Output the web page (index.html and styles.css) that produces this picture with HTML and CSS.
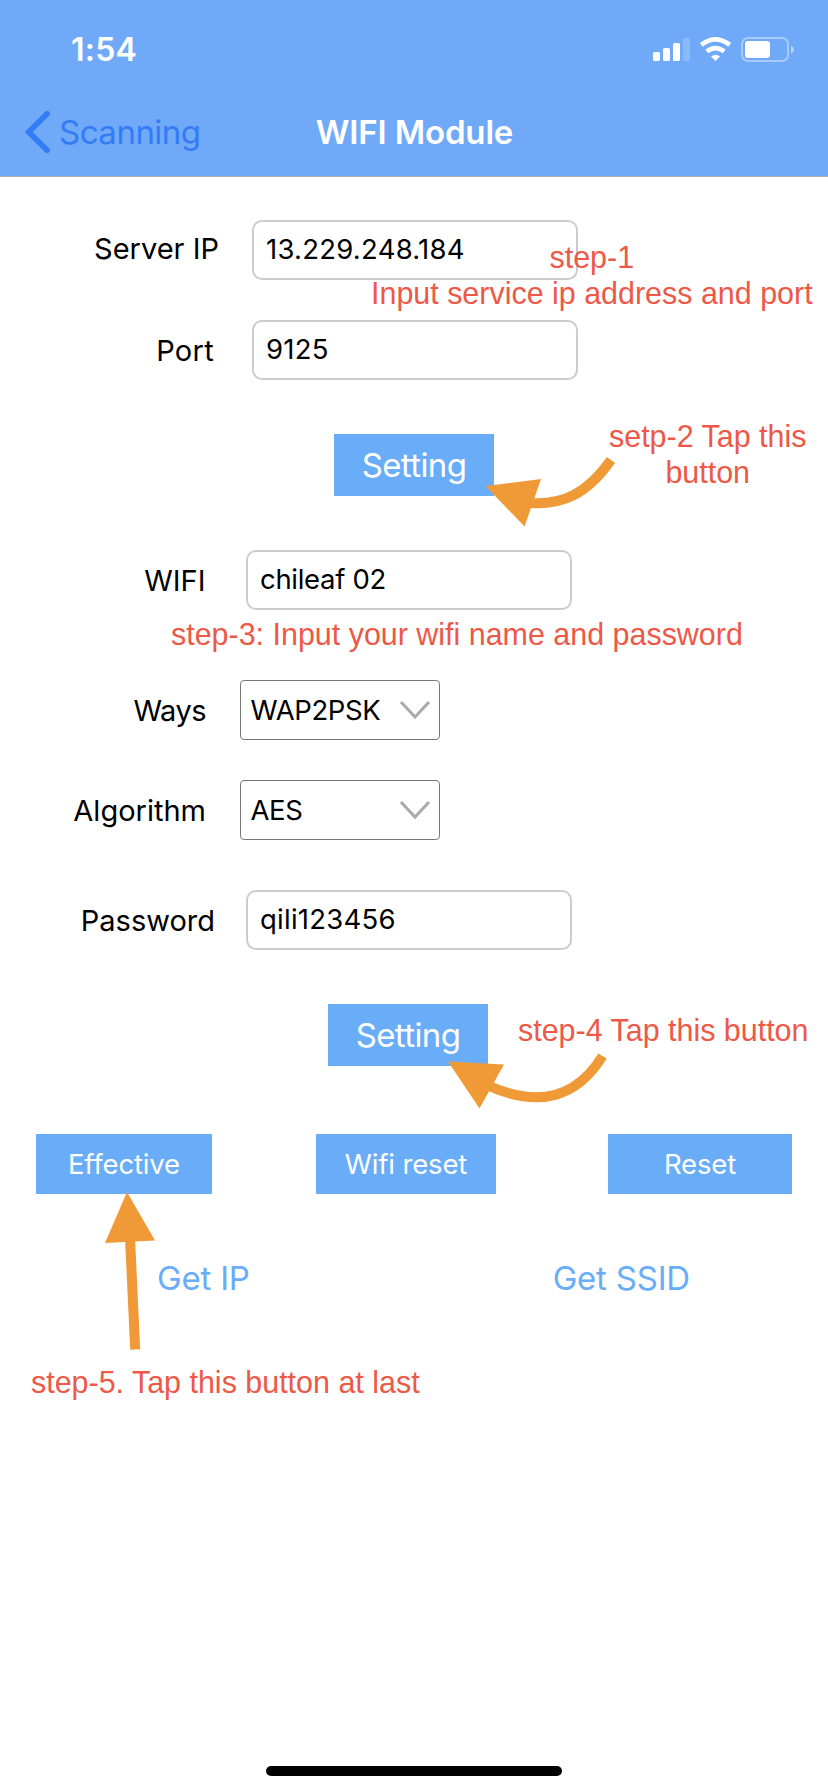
FILE: index.html
```
<!DOCTYPE html>
<html lang="en">
<head>
<meta charset="utf-8">
<title>WIFI Module</title>
<link rel="stylesheet" href="styles.css">
</head>
<body>
<div class="screen">
  <header class="header">
    <div class="status">
      <span class="time">1:54</span>
      <svg class="status-icons" width="142" height="26" viewBox="652 37 142 26">
        <g fill="#fff">
          <rect x="653" y="52" width="7" height="9" rx="1.6"/>
          <rect x="663" y="48" width="7" height="13" rx="1.6"/>
          <rect x="673" y="43" width="7" height="18" rx="1.6"/>
          <rect x="683" y="38" width="7" height="23" rx="1.6" opacity=".2"/>
          <path d="M715.5 61 L711 56.5 Q715.500 52.800 720 56.500Z"/>
          <rect x="745" y="41" width="25" height="17" rx="3"/>
        </g>
        <g fill="none" stroke="#fff" stroke-width="4.600">
          <path d="M701.300 44.900 Q715.500 33.800 729.700 44.900"/>
          <path d="M706.800 51.400 Q715.500 44.800 724.200 51.400"/>
        </g>
        <rect x="742" y="38" width="46" height="23" rx="6" fill="none" stroke="#fff" stroke-width="2" opacity=".4"/>
        <path d="M791 45.500 Q794 47 794 49.500 Q794 52 791 53.500Z" fill="#fff" opacity=".5"/>
      </svg>
    </div>
    <nav class="nav">
      <a class="back">
        <svg width="26" height="44" viewBox="25 110 26 44"><path d="M47.200 113.800 L28.700 132 L47.200 150.200" fill="none" stroke="#347cf7" stroke-width="5.600" stroke-linecap="round"/></svg>
        <span>Scanning</span>
      </a>
      <h1 class="title">WIFI Module</h1>
    </nav>
  </header>

  <main class="form">
    <div class="row server"><label>Server IP</label><div class="input">13.229.248.184</div></div>
    <div class="row port"><label>Port</label><div class="input">9125</div></div>
    <button class="btn setting first">Setting</button>
    <div class="row narrow wifi"><label>WIFI</label><div class="input">chileaf 02</div></div>
    <div class="row pick ways"><label>Ways</label><div class="select">WAP2PSK<svg width="32" height="22" viewBox="0 0 32 22"><path d="M2 2 L16 17 L30 2" fill="none" stroke="#aaa" stroke-width="3"/></svg></div></div>
    <div class="row pick algorithm"><label>Algorithm</label><div class="select">AES<svg width="32" height="22" viewBox="0 0 32 22"><path d="M2 2 L16 17 L30 2" fill="none" stroke="#aaa" stroke-width="3"/></svg></div></div>
    <div class="row narrow password"><label>Password</label><div class="input">qili123456</div></div>
    <button class="btn setting second">Setting</button>
    <div class="actions">
      <button class="btn effective">Effective</button>
      <button class="btn wifi-reset">Wifi reset</button>
      <button class="btn reset">Reset</button>
    </div>
    <div class="links"><a>Get IP</a><a>Get SSID</a></div>
  </main>

  <p class="note step1">step-1<br>Input service ip address and port</p>
  <p class="note step2">setp-2 Tap this<br>button</p>
  <p class="note step3">step-3: Input your wifi name and password</p>
  <p class="note step4">step-4 Tap this button</p>
  <p class="note step5">step-5. Tap this button at last</p>

  <svg class="arrows" width="828" height="1792" viewBox="0 0 828 1792">
    <g fill="#f09a37">
      <path d="M485.500 486 L541 479 L524.500 526.500Z"/>
      <path d="M448 1061.500 L504 1064.500 L479.500 1108.500Z"/>
      <path d="M127 1192 L155 1240.500 L105 1243Z"/>
    </g>
    <g fill="none" stroke="#f09a37" stroke-width="10">
      <path d="M611 460 C587 494 563 505 530 503"/>
      <path d="M602.500 1056 C578 1096 541 1109 489 1086"/>
      <path d="M130 1238 L135.200 1349.500"/>
    </g>
  </svg>
  <div class="home"></div>
</div>
</body>
</html>
```
FILE: styles.css
```
* { box-sizing: border-box; }
body { margin: 0; background: #fff; font-family: Inter, "Liberation Sans", sans-serif; color: #000; }
.screen { position: relative; width: 828px; height: 1792px; overflow: hidden; background: #fff; display: flex; flex-direction: column; }
.header { height: 177px; background: #6fa9f7; border-bottom: 1px solid #a9adb3; color: #fff; }
.status { height: 88px; display: flex; justify-content: space-between; align-items: flex-start; padding: 30px 34px 0 71px; }
.time { font-size: 32px; line-height: 40px; font-weight: 600; letter-spacing: .2px; }
.status-icons { margin-top: 7px; }
.nav { position: relative; height: 88px; display: flex; align-items: center; justify-content: center; }
.back { position: absolute; left: 25px; top: 22px; display: flex; gap: 8px; color: #347cf7; font-size: 33px; line-height: 44px; letter-spacing: -.5px; }
.title { margin: 0; padding-left: 1px; font-size: 33px; line-height: 44px; font-weight: 600; letter-spacing: -.15px; }
.form { display: flex; flex-direction: column; }
.row { display: flex; height: 60px; }
.row label { width: 252px; padding-right: 33px; text-align: right; font-size: 29px; line-height: 58px; white-space: nowrap; }
.row.narrow label { width: 246px; }
.row.pick label { width: 240px; padding-right: 34px; line-height: 62px; }
.input { width: 326px; border: 2px solid #ccc; border-radius: 10px; padding-left: 12px; font-size: 27.5px; line-height: 54px; letter-spacing: .25px; }
.select { width: 200px; border: 1px solid #777; border-radius: 4px; padding: 0 8px 0 9.5px; display: flex; justify-content: space-between; font-size: 27.5px; line-height: 58px; letter-spacing: -.4px; }
.select svg { margin-top: 19px; }
.server { margin-top: 43px; }
.port { margin-top: 40px; }
.port label { padding-right: 38px; line-height: 62px; letter-spacing: .3px; }
.wifi { margin-top: 54px; }
.wifi label { padding-right: 40.5px; line-height: 62px; }
.wifi .input { letter-spacing: -.3px; }
.ways { margin-top: 70px; }
.ways label { letter-spacing: -.5px; }
.algorithm { margin-top: 40px; }
.password { margin-top: 50px; }
.row.password label { padding-right: 31px; line-height: 62px; }
.btn { border: 0; padding: 0; background: #69adf8; color: #fff; font-family: inherit; font-size: 27.5px; height: 60px; letter-spacing: -.15px; }
.setting { width: 160px; height: 62px; font-size: 33px; letter-spacing: -.6px; }
.first { margin: 54px 0 0 334px; }
.second { margin: 54px 0 0 328px; }
.actions { display: flex; justify-content: space-between; margin-top: 68px; padding: 0 36px; }
.effective { width: 176px; }
.wifi-reset { width: 180px; margin-left: -8px; }
.reset { width: 184px; }
.links { display: flex; justify-content: space-between; margin-top: 64px; padding: 0 138px 0 157px; color: #69adf8; font-size: 33px; line-height: 40px; letter-spacing: -.2px; }
.note { position: absolute; margin: 0; color: #ed5847; font: 30.45px/36px "Liberation Sans", Arial, sans-serif; text-align: center; white-space: nowrap; }
.step1 { left: 371px; top: 239px; }
.step2 { left: 609px; top: 418px; }
.step3 { left: 171px; top: 616px; }
.step4 { left: 518px; top: 1012px; }
.step5 { left: 31px; top: 1364px; }
.arrows { position: absolute; left: 0; top: 0; pointer-events: none; }
.home { position: absolute; left: 266px; top: 1766px; width: 296px; height: 10px; border-radius: 5px; background: #000; }
```
